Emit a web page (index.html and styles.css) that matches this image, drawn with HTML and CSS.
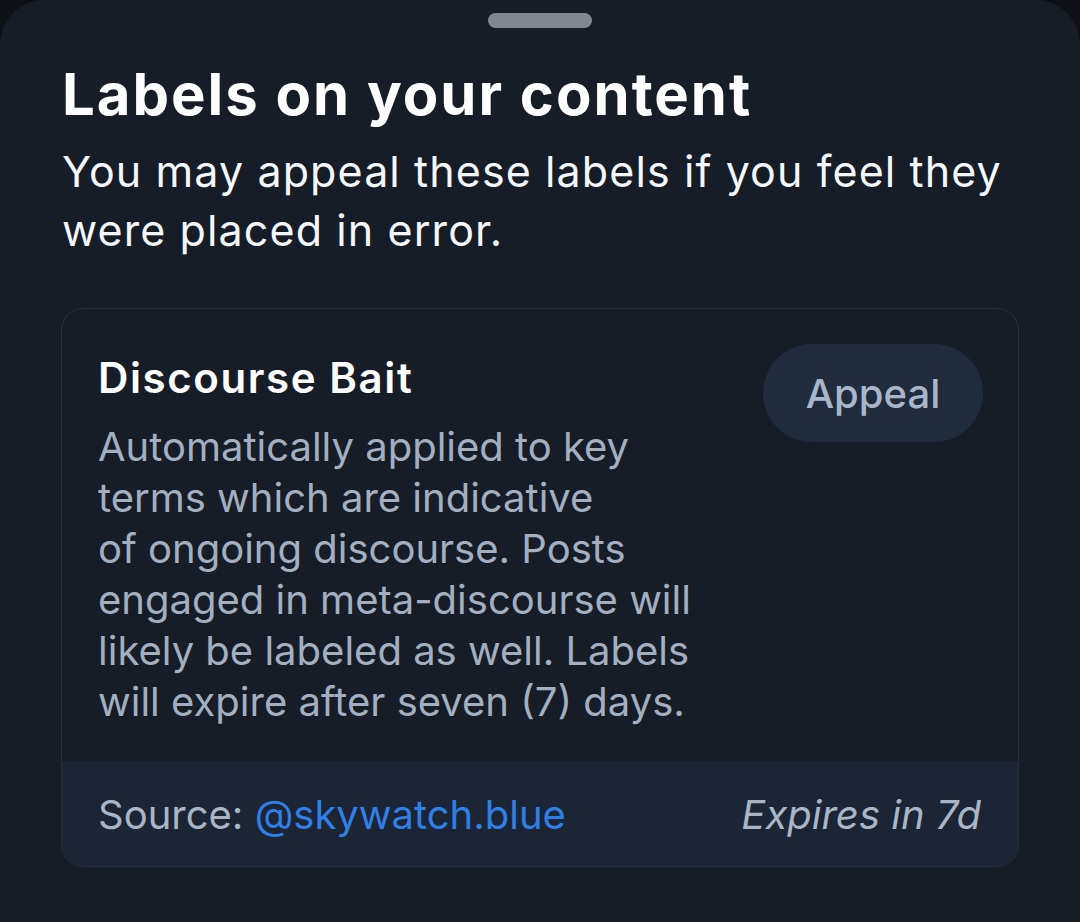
FILE: index.html
```html
<!DOCTYPE html>
<html lang="en">
<head>
<meta charset="utf-8">
<title>Labels on your content</title>
<link rel="stylesheet" href="styles.css">
</head>
<body>
<div class="sheet">
  <div class="handle"></div>
  <h1 class="title">Labels on your content</h1>
  <p class="subtitle">You may appeal these labels if you feel they were placed in error.</p>
  <div class="card">
    <div class="card-main">
      <div class="card-text">
        <div class="label-name">Discourse Bait</div>
        <div class="label-desc">Automatically applied to key<br>terms which are indicative<br>of ongoing discourse. Posts<br>engaged in meta-discourse will<br>likely be labeled as well. Labels<br>will expire after seven (7) days.</div>
      </div>
      <button class="appeal">Appeal</button>
    </div>
    <div class="card-footer">
      <div class="source">Source: <span class="handle-link">@skywatch.blue</span></div>
      <div class="expires">Expires in 7d</div>
    </div>
  </div>
</div>
</body>
</html>
```

FILE: styles.css
```css
html, body {
  margin: 0;
  padding: 0;
  background: #0d1116;
}
body {
  font-family: Inter, "Noto Sans", sans-serif;
  color: #ffffff;
}
.sheet {
  background: #161d27;
  border-radius: 44px 44px 0 0;
  min-height: 922px;
  padding: 0 61px;
  box-sizing: border-box;
  display: flex;
  flex-direction: column;
}
.handle {
  align-self: center;
  width: 104px;
  height: 15px;
  border-radius: 8px;
  background: #80878f;
  margin-top: 13px;
}
.title {
  margin: 31px 0 0 1px;
  font-size: 58px;
  font-weight: 700;
  line-height: 70px;
  letter-spacing: 2px;
}
.subtitle {
  margin: 13px 0 0 1px;
  font-size: 43px;
  line-height: 59px;
  font-weight: 400;
  letter-spacing: 1.1px;
  color: #f4f6f8;
}
.card {
  margin-top: 48px;
  border: 1px solid #27313e;
  border-radius: 22px;
  overflow: hidden;
  width: 958px;
  box-sizing: border-box;
}
.card-main {
  display: flex;
  justify-content: space-between;
  align-items: flex-start;
  padding: 35px 35px 35px 36px;
}
.label-name {
  margin-top: 9px;
  font-size: 42px;
  font-weight: 600;
  line-height: 50px;
  letter-spacing: 1.6px;
  color: #ffffff;
}
.label-desc {
  margin-top: 18px;
  font-size: 40px;
  line-height: 51px;
  color: #a3afbf;
}
.appeal {
  font-family: inherit;
  border: none;
  background: #202b3b;
  color: #a9b5c8;
  font-size: 40px;
  font-weight: 500;
  height: 98px;
  width: 220px;
  border-radius: 49px;
  padding: 0;
}
.card-footer {
  background: #1b2533;
  border-top: 1px solid #222c39;
  height: 103px;
  display: flex;
  justify-content: space-between;
  align-items: center;
  padding: 0 37px 0 36px;
  font-size: 40px;
}
.source {
  color: #a9b5c5;
}
.handle-link {
  color: #2f7fe8;
}
.expires {
  font-style: italic;
  color: #a9b5c5;
}
```
